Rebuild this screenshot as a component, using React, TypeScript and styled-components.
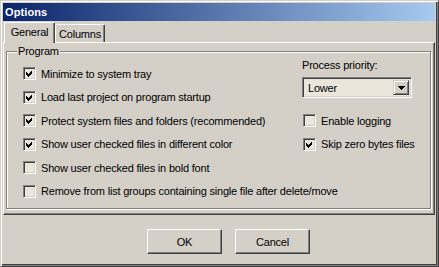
import React from "react";
import styled, { createGlobalStyle } from "styled-components";

const Global = createGlobalStyle`
  html, body { margin: 0; padding: 0; background: #D4D0C8; }
  body {
    font-family: "Liberation Sans", Arial, sans-serif;
    font-size: 11px;
    letter-spacing: -0.2px;
    color: #000;
  }
  * { box-sizing: border-box; }
`;

const Window = styled.div`
  width: 439px;
  height: 267px;
  background: #D4D0C8;
  border: 1px solid;
  border-color: #D4D0C8 #404040 #404040 #D4D0C8;
  box-shadow: inset 1px 1px #fff, inset -1px -1px #808080, inset -2px -2px #404040;
  padding: 2px 3px 0 2px;
  display: flex;
  flex-direction: column;
`;

const TitleBar = styled.div`
  height: 18px;
  flex: none;
  background: linear-gradient(to right, #0a246a, #a6caf0);
  color: #fff;
  font-weight: bold;
  font-size: 11px;
  letter-spacing: 0.1px;
  padding-left: 2px;
  display: flex;
  align-items: center;
`;

const TabStrip = styled.div`
  margin-top: 1px;
  height: 20px;
  flex: none;
  display: flex;
  align-items: flex-end;
  padding-left: 1px;
`;

const Tab = styled.div<{ $active?: boolean }>`
  position: relative;
  z-index: ${(p) => (p.$active ? 1 : 0)};
  width: ${(p) => (p.$active ? 51 : 50)}px;
  height: ${(p) => (p.$active ? 21 : 18)}px;
  margin-bottom: ${(p) => (p.$active ? -1 : 0)}px;
  padding-bottom: ${(p) => (p.$active ? 2 : 0)}px;
  background: #D4D0C8;
  border-top: 1px solid #fff;
  border-left: 1px solid #fff;
  border-right: 1px solid #404040;
  box-shadow: inset -1px 0 #808080;
  border-radius: 2px 2px 0 0;
  display: flex;
  align-items: center;
  justify-content: center;
`;

const Panel = styled.div`
  height: 173px;
  flex: none;
  border-top: 1px solid #fff;
  border-left: 1px solid #fff;
  border-right: 1px solid #404040;
  border-bottom: 1px solid #404040;
  box-shadow: inset -1px -1px #808080;
  padding: 8px 2px 4px 2px;
`;

const GroupBox = styled.div`
  position: relative;
  height: 158px;
  margin-right: 1px;
  border: 1px solid #808080;
  box-shadow: inset 1px 1px #fff, 1px 1px #fff;
  padding: 15px 0 0 16px;
`;

const Legend = styled.div`
  position: absolute;
  top: -7px;
  left: 10px;
  padding: 0 1px;
  line-height: 13px;
  background: #D4D0C8;
`;

const Grid = styled.div`
  display: grid;
  grid-template-columns: 279px auto;
  grid-template-rows: repeat(6, 13px);
  row-gap: 10.5px;
`;

const Row = styled.label<{ $wide?: boolean; $col?: number; $row: number; $indent?: number }>`
  grid-column: ${(p) => (p.$wide ? "1 / -1" : p.$col ?? 1)};
  grid-row: ${(p) => p.$row};
  display: flex;
  align-items: center;
  gap: 5px;
  height: 13px;
  padding-left: ${(p) => p.$indent ?? 0}px;
  white-space: nowrap;
`;

const Box = styled.span`
  width: 13px;
  height: 13px;
  flex: none;
  background: #eae6dc;
  border: 1px solid;
  border-color: #808080 #fff #fff #808080;
  box-shadow: inset 1px 1px #404040, inset -1px -1px #D4D0C8;
  display: flex;
  align-items: center;
  justify-content: center;
`;

const PriorityStack = styled.div`
  grid-column: 2;
  grid-row: 1 / span 2;
  align-self: start;
  margin-top: -8px;
  display: flex;
  flex-direction: column;
`;

const FieldLabel = styled.div`
  line-height: 13px;
`;

const Combo = styled.div`
  margin-top: 5px;
  width: 110px;
  height: 21px;
  background: #eae6dc;
  border: 1px solid;
  border-color: #808080 #fff #fff #808080;
  box-shadow: inset 1px 1px #404040, inset -1px -1px #D4D0C8;
  padding: 2px;
  display: flex;
  align-items: stretch;
`;

const ComboText = styled.div`
  flex: 1;
  display: flex;
  align-items: center;
  padding-left: 3px;
`;

const ComboButton = styled.div`
  width: 16px;
  flex: none;
  background: #D4D0C8;
  border: 1px solid;
  border-color: #D4D0C8 #404040 #404040 #D4D0C8;
  box-shadow: inset 1px 1px #fff, inset -1px -1px #808080;
  display: flex;
  align-items: center;
  justify-content: center;
`;

const ButtonRow = styled.div`
  display: flex;
  gap: 13px;
  padding-left: 144px;
  margin-top: 14px;
`;

const Button = styled.button`
  width: 75px;
  height: 25px;
  padding: 0;
  background: #D4D0C8;
  font: inherit;
  letter-spacing: inherit;
  color: #000;
  border: 1px solid;
  border-color: #fff #404040 #404040 #fff;
  box-shadow: inset -1px -1px #808080;
  display: flex;
  align-items: center;
  justify-content: center;
`;

const Check = () => (
  <svg width="9" height="9" viewBox="0 0 9 9" shapeRendering="crispEdges">
    <path d="M1 3h1v1h1v1h1v-1h1v-1h1v-1h1v3h-1v1h-1v1h-1v1h-1v-1h-1v-1h-1z" fill="#000" />
  </svg>
);

const CheckRow: React.FC<{
  label: string;
  checked?: boolean;
  row: number;
  col?: number;
  wide?: boolean;
  indent?: number;
}> = ({ label, checked, row, col, wide, indent }) => (
  <Row $row={row} $col={col} $wide={wide} $indent={indent}>
    <Box>{checked && <Check />}</Box>
    <span>{label}</span>
  </Row>
);

export default function App() {
  return (
    <>
      <Global />
      <Window>
        <TitleBar>Options</TitleBar>
        <TabStrip>
          <Tab $active>General</Tab>
          <Tab>Columns</Tab>
        </TabStrip>
        <Panel>
          <GroupBox>
            <Legend>Program</Legend>
            <Grid>
              <CheckRow row={1} checked label="Minimize to system tray" />
              <CheckRow row={2} checked label="Load last project on program startup" />
              <CheckRow row={3} checked label="Protect system files and folders (recommended)" />
              <CheckRow row={4} checked label="Show user checked files in different color" />
              <CheckRow row={5} wide label="Show user checked files in bold font" />
              <CheckRow
                row={6}
                wide
                label="Remove from list groups containing single file after delete/move"
              />
              <PriorityStack>
                <FieldLabel>Process priority:</FieldLabel>
                <Combo>
                  <ComboText>Lower</ComboText>
                  <ComboButton>
                    <svg width="7" height="4" viewBox="0 0 7 4" shapeRendering="crispEdges">
                      <path d="M0 0h7v1h-1v1h-1v1h-1v1h-1v-1h-1v-1h-1v-1h-1z" fill="#000" />
                    </svg>
                  </ComboButton>
                </Combo>
              </PriorityStack>
              <CheckRow row={3} col={2} indent={1} label="Enable logging" />
              <CheckRow row={4} col={2} indent={1} checked label="Skip zero bytes files" />
            </Grid>
          </GroupBox>
        </Panel>
        <ButtonRow>
          <Button>OK</Button>
          <Button>Cancel</Button>
        </ButtonRow>
      </Window>
    </>
  );
}
